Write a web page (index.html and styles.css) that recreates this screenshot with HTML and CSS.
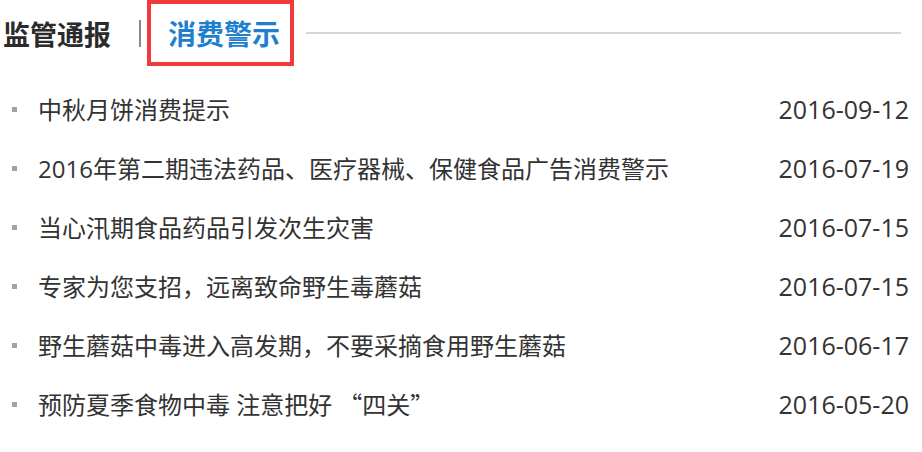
FILE: index.html
```html
<!DOCTYPE html>
<html lang="zh-CN">
<head>
<meta charset="utf-8">
<title>消费警示</title>
<link rel="stylesheet" href="styles.css">
</head>
<body>
<div class="panel">
  <div class="header">
    <span class="title">监管通报</span>
    <span class="sep"></span>
    <span class="tab">消费警示</span>
    <span class="rule"></span>
  </div>
  <ul class="list">
    <li><span class="item">中秋月饼消费提示</span><span class="date">2016-09-12</span></li>
    <li><span class="item">2016年第二期违法药品、医疗器械、保健食品广告消费警示</span><span class="date">2016-07-19</span></li>
    <li><span class="item">当心汛期食品药品引发次生灾害</span><span class="date">2016-07-15</span></li>
    <li><span class="item">专家为您支招，远离致命野生毒蘑菇</span><span class="date">2016-07-15</span></li>
    <li><span class="item">野生蘑菇中毒进入高发期，不要采摘食用野生蘑菇</span><span class="date">2016-06-17</span></li>
    <li><span class="item">预防夏季食物中毒 注意把好<span class="cjk">“四关”</span></span><span class="date">2016-05-20</span></li>
  </ul>
</div>
</body>
</html>
```
FILE: styles.css
```css
html, body {
  margin: 0;
  padding: 0;
  background: #fff;
}
body {
  font-family: "Open Sans", "Noto Sans CJK SC", sans-serif;
  color: #333;
}
.panel {
  width: 922px;
}
.header {
  display: flex;
  align-items: center;
  height: 66px;
}
.title {
  margin-left: 3px;
  font-family: "Noto Sans CJK SC", sans-serif;
  font-size: 27px;
  font-weight: bold;
  line-height: 1;
  color: #2b2b2b;
}
.sep {
  width: 2px;
  height: 27px;
  margin-left: 28px;
  background: #8a8a8a;
}
.tab {
  box-sizing: border-box;
  height: 66px;
  width: 147px;
  margin-left: 6px;
  padding-left: 17px;
  display: flex;
  align-items: center;
  border: 4px solid #f33a3a;
  font-family: "Noto Sans CJK SC", sans-serif;
  font-size: 28px;
  font-weight: bold;
  color: #1f7fcf;
  line-height: 1;
}
.rule {
  flex: 1;
  height: 2px;
  margin-left: 12px;
  margin-right: 21px;
  background: #d6d6d6;
}
.list {
  list-style: none;
  margin: 14px 0 0 0;
  padding: 0 13px 0 0;
}
.list li {
  display: flex;
  align-items: center;
  height: 59px;
  font-size: 24px;
  line-height: 1;
}
.list li::before {
  content: "";
  width: 5px;
  height: 5px;
  margin-left: 12px;
  margin-right: 21px;
  background: #a3a3a3;
  flex: none;
}
.item {
  flex: 1;
}
.cjk {
  font-family: "Noto Sans CJK SC", sans-serif;
  margin-left: 6px;
}
.date {
  flex: none;
  font-size: 25px;
}
```
